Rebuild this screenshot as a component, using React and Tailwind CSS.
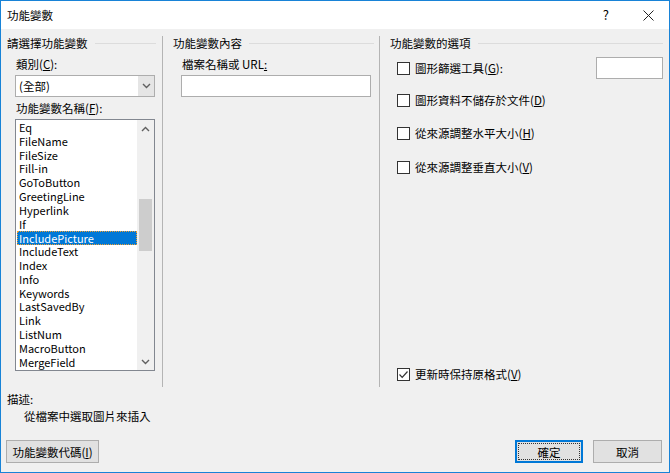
import React from 'react';

const items = [
  'Eq', 'FileName', 'FileSize', 'Fill-in', 'GoToButton', 'GreetingLine', 'Hyperlink', 'If',
  'IncludePicture', 'IncludeText', 'Index', 'Info', 'Keywords', 'LastSavedBy', 'Link',
  'ListNum', 'MacroButton', 'MergeField',
];

const Chevron = ({ up }) => (
  <svg width="9" height="6" viewBox="0 0 9 6" className="block">
    <path
      d={up ? 'M1 5 L4.5 1.5 L8 5' : 'M1 1 L4.5 4.5 L8 1'}
      fill="none"
      stroke="#606060"
      strokeWidth="1.4"
    />
  </svg>
);

const Heading = ({ children }) => (
  <div className="flex h-[16px] items-center gap-[7px]">
    <span className="whitespace-nowrap">{children}</span>
    <div className="h-px flex-1 bg-[#dcdcdc]" />
  </div>
);

const Checkbox = ({ checked }) => (
  <span className="flex h-[13px] w-[13px] shrink-0 items-center justify-center border border-[#333] bg-white">
    {checked && (
      <svg width="11" height="11" viewBox="0 0 11 11">
        <path d="M1.5 5.5 L4.2 8.3 L9.5 2.5" fill="none" stroke="#333" strokeWidth="1.2" />
      </svg>
    )}
  </span>
);

const Option = ({ checked, label, k, suffix = '', className = '' }) => (
  <div className={`flex h-[16px] items-center gap-[5px] pl-[7px] ${className}`}>
    <Checkbox checked={checked} />
    <span className="whitespace-nowrap">
      {label}(<u>{k}</u>){suffix}
    </span>
  </div>
);

const Separator = () => <div className="mt-px w-px self-stretch bg-[#b4b4b4]" />;

export default function App() {
  return (
    <div className="flex h-[473px] w-[670px] flex-col border border-[#1883d7] font-['Noto_Sans_CJK_TC',sans-serif] text-[11.5px] leading-[16px] text-black">
      <div className="flex h-[28px] shrink-0 items-center bg-white pl-[6px]">
        <span>功能變數</span>
        <span className="ml-auto mr-[34px] text-[13px]">?</span>
        <svg width="11" height="11" viewBox="0 0 11 11" className="mr-[15px]">
          <path d="M0.5 0.5 L10.5 10.5 M10.5 0.5 L0.5 10.5" stroke="#222" strokeWidth="1" />
        </svg>
      </div>

      <div className="flex flex-1 flex-col bg-[#f0f0f0]">
        <div className="flex h-[358px] px-[6px] pt-[6px]">
          {/* left */}
          <div className="flex w-[149px] flex-col">
            <Heading>請選擇功能變數</Heading>
            <div className="mt-[5px] pl-[9px]">
              類別(<u>C</u>):
            </div>
            <div className="ml-[8px] mt-[3px] flex h-[22px] w-[140px] border border-[#adadad] bg-white">
              <span className="flex-1 pl-[3px] leading-[20px]">(全部)</span>
              <span className="flex w-[16px] items-center justify-center bg-[#e5e5e5]">
                <Chevron />
              </span>
            </div>
            <div className="mt-[3px] pl-[9px]">
              功能變數名稱(<u>F</u>):
            </div>
            <div className="ml-[8px] mt-[3px] flex h-[252px] w-[140px] border border-[#828790] bg-white text-[11px]">
              <div className="flex-1 overflow-hidden pt-px">
                {items.map((it) =>
                  it === 'IncludePicture' ? (
                    <div
                      key={it}
                      className="ml-px h-[13.8px] border border-dotted border-[#f0a030] bg-[#0078d7] pl-px leading-[12px] text-white"
                    >
                      {it}
                    </div>
                  ) : (
                    <div key={it} className="h-[13.8px] pl-[3px] leading-[13.8px]">
                      {it}
                    </div>
                  )
                )}
              </div>
              <div className="flex w-[17px] flex-col items-center bg-[#f0f0f0]">
                <div className="flex h-[17px] items-center">
                  <Chevron up />
                </div>
                <div className="mt-[62px] h-[52px] w-[13px] bg-[#cdcdcd]" />
                <div className="mt-auto flex h-[17px] items-center">
                  <Chevron />
                </div>
              </div>
            </div>
          </div>

          <div className="ml-[6px]" />
          <Separator />

          {/* middle */}
          <div className="ml-[10px] flex w-[201px] flex-col">
            <Heading>功能變數內容</Heading>
            <div className="mt-[5px] pl-[9px]">
              檔案名稱或 URL<u>:</u>
            </div>
            <div className="ml-[8px] mt-[3px] h-[22px] w-[190px] border border-[#adadad] bg-white" />
          </div>

          <div className="ml-[5px]" />
          <Separator />

          {/* right */}
          <div className="ml-[10px] flex flex-1 flex-col pb-[5px]">
            <Heading>功能變數的選項</Heading>
            <div className="mt-[6px] flex h-[22px] items-center">
              <Option label="圖形篩選工具" k="G" suffix=":" />
              <div className="ml-auto h-[22px] w-[67px] border border-[#adadad] bg-white" />
            </div>
            <Option className="mt-[13px]" label="圖形資料不儲存於文件" k="D" />
            <Option className="mt-[17px]" label="從來源調整水平大小" k="H" />
            <Option className="mt-[18px]" label="從來源調整垂直大小" k="V" />
            <Option className="mt-auto" checked label="更新時保持原格式" k="V" />
          </div>
        </div>

        <div className="mt-[4px] pl-[6px]">描述:</div>
        <div className="mt-px pl-[23px]">從檔案中選取圖片來插入</div>

        <div className="mt-[16px] flex px-[5px] pr-[7px]">
          <button className="h-[23px] w-[93px] border border-[#adadad] bg-[#e1e1e1] leading-[20px]">
            功能變數代碼(<u>I</u>)
          </button>
          <button className="ml-auto flex h-[23px] w-[68px] items-center justify-center border-2 border-[#0078d7] bg-[#e1e1e1] p-px">
            <span className="flex h-full w-full items-center justify-center border border-dotted border-[#333]">
              確定
            </span>
          </button>
          <button className="ml-[10px] h-[23px] w-[69px] border border-[#adadad] bg-[#e1e1e1]">
            取消
          </button>
        </div>
      </div>
    </div>
  );
}
